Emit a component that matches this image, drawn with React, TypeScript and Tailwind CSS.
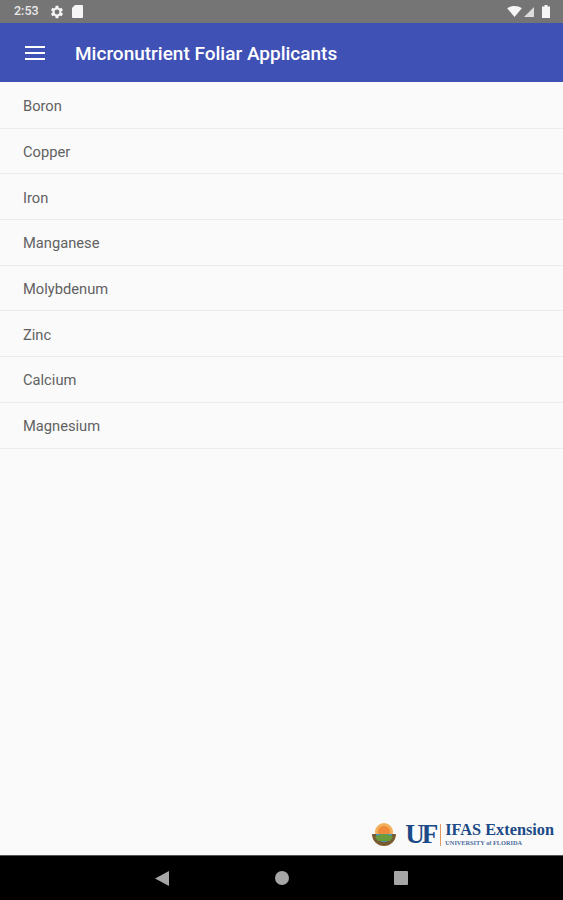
import React from 'react';

const items = ['Boron', 'Copper', 'Iron', 'Manganese', 'Molybdenum', 'Zinc', 'Calcium', 'Magnesium'];

const StatusBar = () => (
  <div className="h-[23px] shrink-0 bg-[#757575] flex items-center justify-between pl-[14px] pr-[13px] text-white">
    <div className="flex items-center">
      <span className="text-[12.500px] font-medium text-[#e8e8e8] w-[26px]">2:53</span>
      <svg className="w-[14px] h-[14px] ml-[10px]" viewBox="3 2 20 20" fill="#f5f5f5">
        <path d="M19.4 13a7.5 7.5 0 0 0 0-2l2.100-1.600-2-3.500-2.500 1a7.600 7.600 0 0 0-1.700-1L15 3.200h-4l-.4 2.700a7.600 7.600 0 0 0-1.700 1l-2.500-1-2 3.500L6.500 11a7.500 7.500 0 0 0 0 2l-2.100 1.600 2 3.500 2.500-1a7.600 7.600 0 0 0 1.700 1l.4 2.700h4l.4-2.700a7.600 7.600 0 0 0 1.700-1l2.500 1 2-3.500zM13 15.500a3.500 3.500 0 1 1 0-7 3.500 3.500 0 0 1 0 7z" />
      </svg>
      <svg className="w-[11px] h-[13px] ml-[8px]" viewBox="1 0 11 13" fill="#f5f5f5">
        <path d="M4 0h7a1 1 0 0 1 1 1v11a1 1 0 0 1-1 1H2a1 1 0 0 1-1-1V3z" />
      </svg>
    </div>
    <div className="flex items-center">
      <svg className="w-[15px] h-[11px]" viewBox="0 0 16 12" fill="#f5f5f5">
        <path d="M0 2.500C4.500-.8 11.500-.8 16 2.500L8 12z" />
      </svg>
      <svg className="w-[10px] h-[10px] ml-[2px]" viewBox="0 0 11 11" fill="#dcdcdc">
        <path d="M11 0v11H0z" />
      </svg>
      <svg className="w-[8px] h-[13px] ml-[8px]" viewBox="0 0 8 13" fill="#f5f5f5">
        <path d="M2.500 0h3v1.500H8V13H0V1.500h2.500z" />
      </svg>
    </div>
  </div>
);

const Header = () => (
  <div className="h-[59px] shrink-0 bg-[#3f51b5] flex items-center pl-[25px]">
    <div className="w-[20px] flex flex-col gap-[4px]">
      <div className="h-[2px] bg-white" />
      <div className="h-[2px] bg-white" />
      <div className="h-[2px] bg-white" />
    </div>
    <h1 className="ml-[30px] pt-[3px] text-[19px] font-medium text-white">Micronutrient Foliar Applicants</h1>
  </div>
);

const Logo = () => (
  <div className="flex items-center justify-end pr-[9px] pb-[6px]">
    <svg className="w-[26px] h-[26px]" viewBox="0 0 26 26">
      <circle cx="13" cy="10" r="9" fill="#f2b05a" />
      <circle cx="13" cy="10" r="6" fill="#ee8a3a" />
      <path d="M1 12h24a12 12 0 0 1-24 0z" fill="#7a5a30" />
      <path d="M5 12h16a8 8 0 0 1-16 0z" fill="#3f9ac0" />
      <path d="M4 15c5-4 12-4 18 0l-3 4H7z" fill="#6a9a3a" />
    </svg>
    <span className="ml-[8px] font-['Liberation_Serif',serif] font-bold text-[27px] leading-none tracking-[-3px] text-[#1c4a86] w-[31px]">UF</span>
    <div className="ml-[4px] w-px h-[22px] bg-[#e09a60]" />
    <div className="ml-[4px] mb-[2px] flex flex-col font-['Liberation_Serif',serif] text-[#1c4a86]">
      <span className="text-[16.300px] font-bold leading-[19px] whitespace-nowrap">IFAS Extension</span>
      <span className="text-[6.300px] font-bold leading-[8px] whitespace-nowrap text-[#4a6c9c]">UNIVERSITY of FLORIDA</span>
    </div>
  </div>
);

const NavBar = () => (
  <div className="h-[45px] shrink-0 bg-black flex items-center justify-between pl-[155px] pr-[155px] border-t border-[#555555]">
    <svg className="w-[14px] h-[15px]" viewBox="0 0 14 15" fill="#a6a6a6">
      <path d="M14 0v15L0 7.500z" />
    </svg>
    <div className="w-[14px] h-[14px] rounded-full bg-[#a6a6a6]" />
    <div className="w-[14px] h-[14px] rounded-[1px] bg-[#a6a6a6]" />
  </div>
);

export default function App() {
  return (
    <div className="w-[563px] h-[900px] flex flex-col bg-[#fafafa] font-['Roboto',sans-serif] overflow-hidden">
      <StatusBar />
      <Header />
      <div className="flex-1 flex flex-col justify-between min-h-0 pt-px">
        <ul>
          {items.map(name => (
            <li key={name} className="h-[45.700px] pl-[23px] pt-[2px] flex items-center border-b border-[#ececec] text-[14.700px] text-[#616161]">
              {name}
            </li>
          ))}
        </ul>
        <Logo />
      </div>
      <NavBar />
    </div>
  );
}
